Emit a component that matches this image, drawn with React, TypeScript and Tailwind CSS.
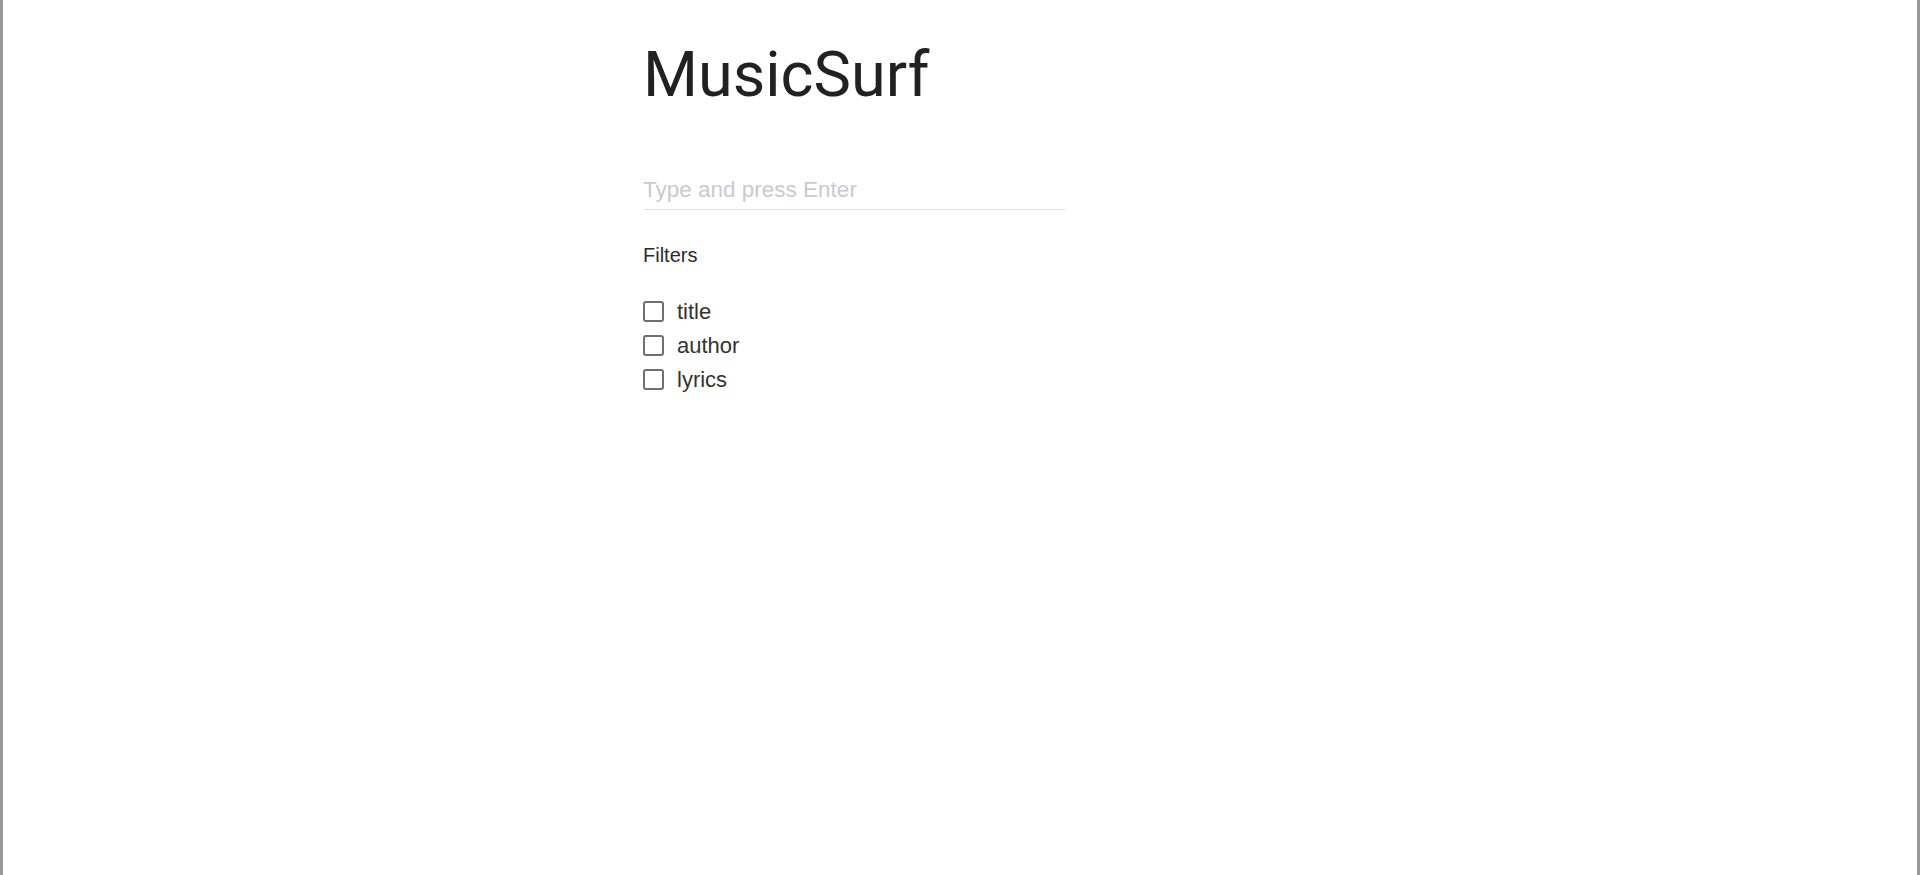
import React from "react";

const filters = ["title", "author", "lyrics"];

export default function App() {
  return (
    <div className="min-h-[875px] h-[875px] bg-white border-l-[3px] border-r-[3px] border-[#9a9a9a] flex justify-center">
      <div className="w-[634px] pt-[44px] flex flex-col">
        <h1 className="font-['Roboto',sans-serif] text-[63px] leading-[62px] text-[#212121] font-normal">
          MusicSurf
        </h1>
        <input
          type="text"
          placeholder="Type and press Enter"
          className="mt-[71px] w-[422px] h-[33px] pb-[7px] leading-[25px] font-['Liberation_Sans',Arial,sans-serif] text-[22.5px] text-[#333] placeholder:text-[#cbc9d2] border-b border-[#e2e2e2] outline-none bg-transparent"
        />
        <div className="mt-[34px] font-['Liberation_Sans',Arial,sans-serif] text-[20px] leading-[23px] text-[#2a2a2a]">
          Filters
        </div>
        <div className="mt-[27px] flex flex-col">
          {filters.map((f) => (
            <label key={f} className="h-[34px] flex items-center gap-[13px] cursor-pointer">
              <span className="w-[21px] h-[21px] border-2 border-[#6f6f6f] rounded-[3px] bg-white shrink-0" />
              <span className="font-['Liberation_Sans',Arial,sans-serif] text-[22px] leading-[25px] text-[#333]">
                {f}
              </span>
            </label>
          ))}
        </div>
      </div>
    </div>
  );
}
